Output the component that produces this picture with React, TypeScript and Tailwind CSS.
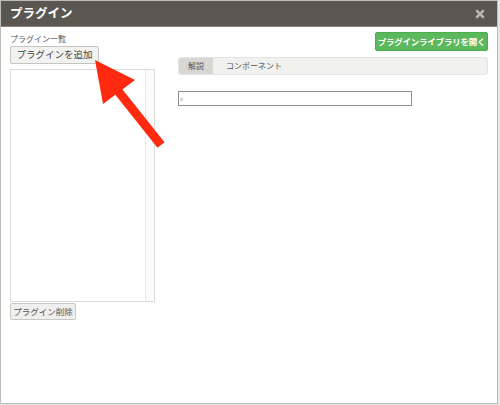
import { X } from "lucide-react";

const FONT = { fontFamily: '"Noto Sans CJK JP", "Noto Sans", sans-serif' };

export default function App() {
  return (
    <div className="w-[500px] h-[405px] bg-[#e6e6e6] relative overflow-hidden" style={FONT}>
      <div className="w-[498px] h-[404px] bg-white border border-[#bdbdb8] flex flex-col">
        {/* Title */}
        <div className="h-[26px] shrink-0 bg-[#5b5750] border-b border-[#8a867e] flex items-center justify-between pl-[9px] pr-[11px]">
          <span className="text-[12.5px] font-bold text-white leading-none">プラグイン</span>
          <X className="w-[12px] h-[12px] text-[#b9b7b2]" strokeWidth={5} />
        </div>

        {/* Body */}
        <div className="flex flex-1 pl-[9px] pr-[9px]">
          {/* Left */}
          <div className="w-[145px] flex flex-col">
            <div className="mt-[7px] text-[8px] text-[#555] leading-[10px]">プラグイン一覧</div>
            <button className="mt-[2px] w-[89px] h-[18px] bg-[#f2f2f0] border border-[#c4c4c0] rounded-[2px] text-[9.5px] text-[#444] leading-none whitespace-nowrap">
              プラグインを追加
            </button>
            <div className="mt-[5px] h-[233px] border border-[#dcdcdc] flex">
              <div className="flex-1" />
              <div className="w-[9px] border-l border-[#e6e6e6] bg-[#fbfbfb]" />
            </div>
            <button className="mt-[1px] w-[66px] h-[17px] bg-[#efefed] border border-[#c8c8c4] rounded-[2px] text-[8.5px] text-[#555] leading-none whitespace-nowrap">
              プラグイン削除
            </button>
          </div>

          {/* Right */}
          <div className="flex-1 flex flex-col items-end">
            <button className="mt-[5px] w-[113px] h-[19px] bg-[#5cb85c] border border-[#4cae4c] rounded-[2px] text-[8.5px] font-bold text-white leading-none whitespace-nowrap tracking-tight">
              プラグインライブラリを開く
            </button>
            <div className="self-stretch pl-[23px] mt-[6px]">
              <div className="h-[18px] bg-[#f1f1ef] border border-[#e4e4e0] rounded-[3px] flex items-center text-[8px] text-[#555]">
                <div className="h-full w-[34px] bg-[#d9d7d3] rounded-l-[3px] flex items-center justify-center">解説</div>
                <div className="pl-[13px]">コンポーネント</div>
              </div>
              <div className="mt-[16px] w-[234px] h-[15px] border border-[#8e8e8e] flex items-center pl-[1px] text-[5px] text-[#999]">
                o
              </div>
            </div>
          </div>
        </div>
      </div>

      {/* Red arrow overlay */}
      <svg className="absolute left-0 top-0" width="500" height="405" viewBox="0 0 500 405">
        <polygon points="95,60 135,80 103,104" fill="#ff2a10" />
        <line x1="118" y1="91" x2="161" y2="145" stroke="#ff2a10" strokeWidth="9" />
      </svg>
    </div>
  );
}
